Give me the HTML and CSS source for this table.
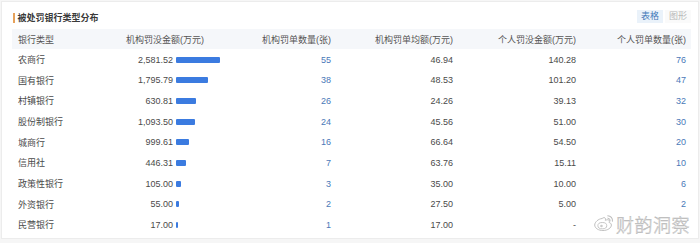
FILE: index.html
```html
<!DOCTYPE html>
<html lang="zh">
<head>
<meta charset="utf-8">
<link rel="stylesheet" href="styles.css">
</head>
<body>
<div class="card">
  <div class="titlebar">
    <div class="title"><span class="mark"></span>被处罚银行类型分布</div>
    <div class="tabs"><span class="tab active">表格</span><span class="tab">图形</span></div>
  </div>
  <div class="table">
    <div class="row head">
      <div class="c1">银行类型</div>
      <div class="c2 hc2">机构罚没金额(万元)</div>
      <div class="c3">机构罚单数量(张)</div>
      <div class="c4">机构罚单均额(万元)</div>
      <div class="c5">个人罚没金额(万元)</div>
      <div class="c6">个人罚单数量(张)</div>
    </div>
    <div class="row"><div class="c1">农商行</div><div class="c2"><span class="num">2,581.52</span><span class="bar" style="width:44px"></span></div><div class="c3 link">55</div><div class="c4">46.94</div><div class="c5">140.28</div><div class="c6 link">76</div></div>
    <div class="row"><div class="c1">国有银行</div><div class="c2"><span class="num">1,795.79</span><span class="bar" style="width:31.5px"></span></div><div class="c3 link">38</div><div class="c4">48.53</div><div class="c5">101.20</div><div class="c6 link">47</div></div>
    <div class="row"><div class="c1">村镇银行</div><div class="c2"><span class="num">630.81</span><span class="bar" style="width:20px"></span></div><div class="c3 link">26</div><div class="c4">24.26</div><div class="c5">39.13</div><div class="c6 link">32</div></div>
    <div class="row"><div class="c1">股份制银行</div><div class="c2"><span class="num">1,093.50</span><span class="bar" style="width:18.5px"></span></div><div class="c3 link">24</div><div class="c4">45.56</div><div class="c5">51.00</div><div class="c6 link">30</div></div>
    <div class="row"><div class="c1">城商行</div><div class="c2"><span class="num">999.61</span><span class="bar" style="width:13px"></span></div><div class="c3 link">16</div><div class="c4">66.64</div><div class="c5">54.50</div><div class="c6 link">20</div></div>
    <div class="row"><div class="c1">信用社</div><div class="c2"><span class="num">446.31</span><span class="bar" style="width:10px"></span></div><div class="c3 link">7</div><div class="c4">63.76</div><div class="c5">15.11</div><div class="c6 link">10</div></div>
    <div class="row"><div class="c1">政策性银行</div><div class="c2"><span class="num">105.00</span><span class="bar" style="width:4.5px"></span></div><div class="c3 link">3</div><div class="c4">35.00</div><div class="c5">10.00</div><div class="c6 link">6</div></div>
    <div class="row"><div class="c1">外资银行</div><div class="c2"><span class="num">55.00</span><span class="bar" style="width:2.5px"></span></div><div class="c3 link">2</div><div class="c4">27.50</div><div class="c5">5.00</div><div class="c6 link">2</div></div>
    <div class="row"><div class="c1">民营银行</div><div class="c2"><span class="num">17.00</span><span class="bar" style="width:1.5px"></span></div><div class="c3 link">1</div><div class="c4">17.00</div><div class="c5">-</div><div class="c6"></div></div>
  </div>
  <div class="watermark">
    <svg class="weibo" width="22" height="19" viewBox="0 0 20 18">
      <path d="M8.2 5.2C4.6 5.6 1.2 8.6 1.2 11.4c0 3 3.6 5.2 7.8 5.2 4.6 0 8-2.6 8-5.2 0-1.6-1.4-2.2-2.2-2.4.6-1.4.4-2.4-.8-2.6-1.2-.2-2.8.6-2.8.6.6-1.6.2-2.6-1.2-2.6-.5 0-1.2.3-1.8.8z" fill="#fff" stroke="#bdbdbd" stroke-width="0.9"/>
      <ellipse cx="8.4" cy="12" rx="4.2" ry="3" fill="#fff" stroke="#bdbdbd" stroke-width="0.8"/>
      <circle cx="7.6" cy="12.4" r="1.2" fill="#cacaca"/>
      <path d="M13.6 2.6a4.6 4.6 0 0 1 4.4 5.2" fill="none" stroke="#bdbdbd" stroke-width="1" stroke-linecap="round"/>
      <path d="M13.6 4.8a2.4 2.4 0 0 1 2.3 2.7" fill="none" stroke="#bdbdbd" stroke-width="0.9" stroke-linecap="round"/>
    </svg>
    <span class="wm-text">财韵洞察</span>
  </div>
</div>
</body>
</html>
```
FILE: styles.css
```css
html, body {
  margin: 0;
  padding: 0;
  background: #f6f6f6;
}
body {
  font-family: "Liberation Sans", "Noto Sans CJK SC", sans-serif;
  font-size: 9px;
  color: #444;
  width: 700px;
  height: 243px;
  overflow: hidden;
}
.card {
  position: relative;
  box-sizing: border-box;
  margin: 1px 1px 0 1px;
  height: 238px;
  background: #fff;
  border: 1px solid #ececec;
  padding: 6px 7px 0 10px;
}
.titlebar {
  display: flex;
  align-items: center;
  justify-content: space-between;
  height: 19px;
  margin-bottom: 1.7px;
}
.title {
  display: flex;
  align-items: center;
  font-size: 9px;
  font-weight: bold;
  color: #3a3a3a;
}
.mark {
  display: inline-block;
  width: 1.5px;
  height: 10px;
  background: #e6a15a;
  margin-left: 1px;
  margin-right: 3px;
}
.tabs {
  display: flex;
  margin-top: -2px;
}
.tab {
  display: inline-block;
  padding: 1px 4px;
  line-height: 11px;
  color: #b8b8b8;
  background: #fafafa;
  margin-left: 2px;
}
.tab.active {
  color: #3f78b8;
  background: #eaf2fa;
}
.table {
  display: flex;
  flex-direction: column;
}
.row {
  display: grid;
  grid-template-columns: 79px 150px 90px 122px 123px 110px;
  height: 20.67px;
  align-items: center;
  color: #4a4a4a;
}
.row.head {
  background: #f5f7fa;
  color: #555;
}
.c1 {
  padding-left: 6px;
}
.c2 {
  display: flex;
  align-items: center;
}
.hc2 {
  padding-left: 35px;
}
.c3, .c4, .c5, .c6 {
  text-align: right;
}
.num {
  display: inline-block;
  width: 82px;
  text-align: right;
  margin-right: 3px;
}
.bar {
  display: inline-block;
  height: 6px;
  background: #3b7be0;
  border-radius: 1px;
}
.link {
  color: #4a78b8;
}
.watermark {
  position: absolute;
  right: 8px;
  bottom: 3px;
  display: flex;
  align-items: center;
  gap: 1px;
}
.weibo {
  display: block;
  margin-top: -3px;
}
.wm-text {
  font-family: "Noto Sans CJK SC", sans-serif;
  font-size: 18px;
  font-weight: 300;
  line-height: 22px;
  color: #fff;
  -webkit-text-stroke: 0.5px #b4b4b4;
  letter-spacing: 0.5px;
}
```
